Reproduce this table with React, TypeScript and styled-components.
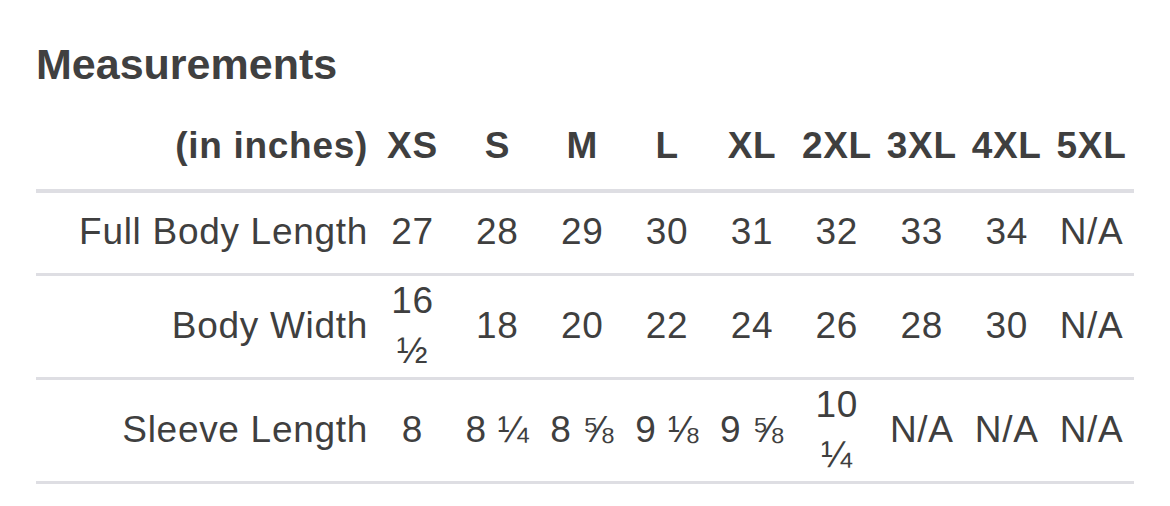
import React from 'react';
import styled, { createGlobalStyle } from 'styled-components';

const GlobalStyle = createGlobalStyle`
  html, body {
    margin: 0;
    padding: 0;
    background: #ffffff;
  }
  body {
    font-family: "Liberation Sans", Arial, Helvetica, sans-serif;
    color: #3f3f3f;
  }
`;

const Page = styled.main`
  width: 1098px;
  padding: 40px 36px 0;
`;

const Title = styled.h2`
  margin: 0;
  font-size: 43px;
  line-height: 1.15;
  font-weight: 700;
  color: #404040;
`;

const Table = styled.div`
  margin-top: 16px;
  display: flex;
  flex-direction: column;
`;

const Row = styled.div<{ $height: number; $head?: boolean }>`
  display: grid;
  grid-template-columns: 334px repeat(9, 1fr);
  height: ${(p) => p.$height}px;
  border-bottom: ${(p) => (p.$head ? 4 : 3)}px solid #dedee3;
`;

const Cell = styled.div<{ $head?: boolean }>`
  display: flex;
  align-items: center;
  justify-content: center;
  padding-bottom: 3px;
  font-size: 37px;
  line-height: 50px;
  letter-spacing: 0.7px;
  font-weight: ${(p) => (p.$head ? 700 : 400)};
  text-align: center;
  white-space: pre-line;
  color: #3f3f3f;
`;

const LabelCell = styled(Cell)`
  justify-content: flex-end;
  text-align: right;
  padding-right: 2px;
`;

const sizes = ['XS', 'S', 'M', 'L', 'XL', '2XL', '3XL', '4XL', '5XL'];

const rows: { label: string; height: number; values: string[] }[] = [
  {
    label: 'Full Body Length',
    height: 80,
    values: ['27', '28', '29', '30', '31', '32', '33', '34', 'N/A'],
  },
  {
    label: 'Body Width',
    height: 101,
    values: ['16\n½', '18', '20', '22', '24', '26', '28', '30', 'N/A'],
  },
  {
    label: 'Sleeve Length',
    height: 101,
    values: ['8', '8 ¼', '8 ⅝', '9 ⅛', '9 ⅝', '10\n¼', 'N/A', 'N/A', 'N/A'],
  },
];

export default function App() {
  return (
    <>
      <GlobalStyle />
      <Page>
        <Title>Measurements</Title>
        <Table>
          <Row $height={84} $head>
            <LabelCell $head>(in inches)</LabelCell>
            {sizes.map((s) => (
              <Cell key={s} $head>
                {s}
              </Cell>
            ))}
          </Row>
          {rows.map((r) => (
            <Row key={r.label} $height={r.height}>
              <LabelCell>{r.label}</LabelCell>
              {r.values.map((v, i) => (
                <Cell key={i}>
                  <span>{v}</span>
                </Cell>
              ))}
            </Row>
          ))}
        </Table>
      </Page>
    </>
  );
}
